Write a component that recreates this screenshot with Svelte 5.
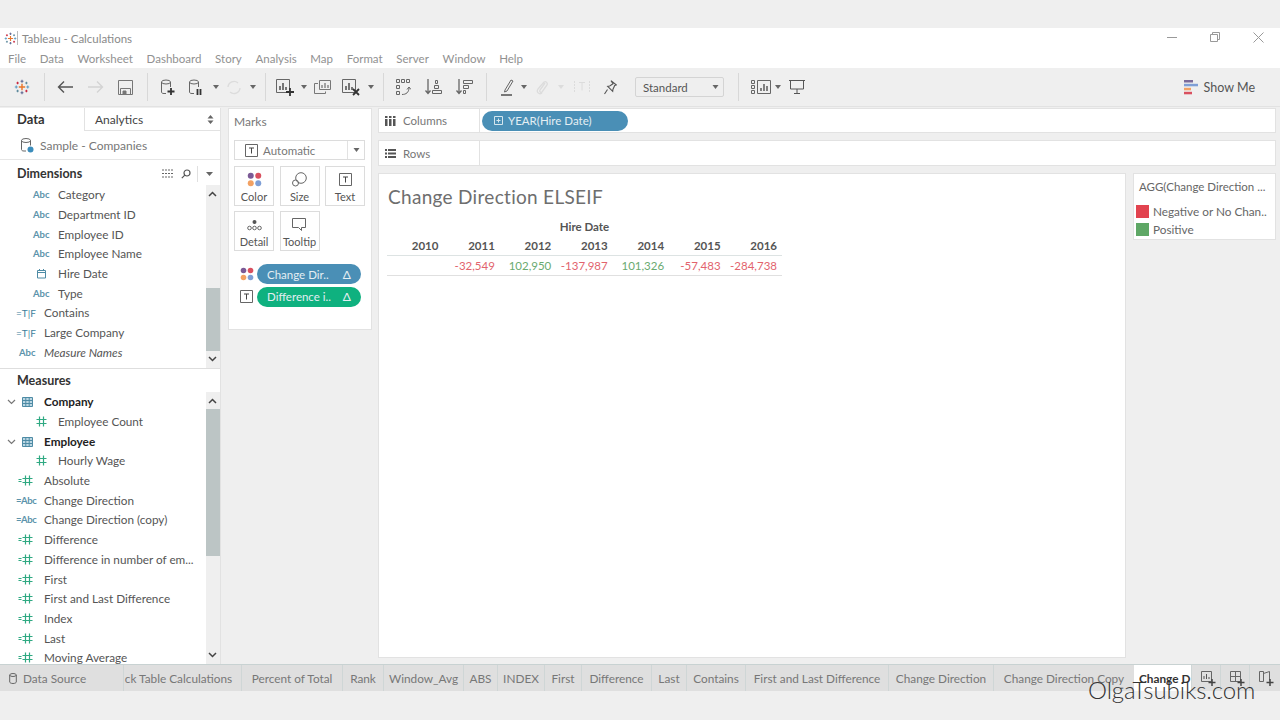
<script>
	const menus = ['File', 'Data', 'Worksheet', 'Dashboard', 'Story', 'Analysis', 'Map', 'Format', 'Server', 'Window', 'Help'];

	const dimensions = [
		{ name: 'Category', icon: 'abc', sub: true },
		{ name: 'Department ID', icon: 'abc', sub: true },
		{ name: 'Employee ID', icon: 'abc', sub: true },
		{ name: 'Employee Name', icon: 'abc', sub: true },
		{ name: 'Hire Date', icon: 'date', sub: true },
		{ name: 'Type', icon: 'abc', sub: true },
		{ name: 'Contains', icon: 'tf' },
		{ name: 'Large Company', icon: 'tf' },
		{ name: 'Measure Names', icon: 'abc', italic: true }
	];

	const measures = [
		{ name: 'Company', icon: 'table', bold: true },
		{ name: 'Employee Count', icon: 'hash', sub: true },
		{ name: 'Employee', icon: 'table', bold: true },
		{ name: 'Hourly Wage', icon: 'hash', sub: true },
		{ name: 'Absolute', icon: 'calc' },
		{ name: 'Change Direction', icon: 'calcabc' },
		{ name: 'Change Direction (copy)', icon: 'calcabc' },
		{ name: 'Difference', icon: 'calc' },
		{ name: 'Difference in number of em...', icon: 'calc' },
		{ name: 'First', icon: 'calc' },
		{ name: 'First and Last Difference', icon: 'calc' },
		{ name: 'Index', icon: 'calc' },
		{ name: 'Last', icon: 'calc' },
		{ name: 'Moving Average', icon: 'calc' }
	];

	const years = [2010, 2011, 2012, 2013, 2014, 2015, 2016];
	const values = [
		{ v: '', c: '' },
		{ v: '-32,549', c: 'neg' },
		{ v: '102,950', c: 'pos' },
		{ v: '-137,987', c: 'neg' },
		{ v: '101,326', c: 'pos' },
		{ v: '-57,483', c: 'neg' },
		{ v: '-284,738', c: 'neg' }
	];

	const tabs = [
		{ name: 'ck Table Calculations', w: 118, clip: true },
		{ name: 'Percent of Total', w: 101 },
		{ name: 'Rank', w: 41 },
		{ name: 'Window_Avg', w: 80 },
		{ name: 'ABS', w: 34 },
		{ name: 'INDEX', w: 47 },
		{ name: 'First', w: 37 },
		{ name: 'Difference', w: 70 },
		{ name: 'Last', w: 35 },
		{ name: 'Contains', w: 59 },
		{ name: 'First and Last Difference', w: 143 },
		{ name: 'Change Direction', w: 105 },
		{ name: 'Change Direction Copy', w: 141 }
	];
</script>

{#snippet logo(size)}
	<svg width={size} height={size} viewBox="0 0 20 20" fill="none" stroke-width="1.3">
		<path d="M10 6v8M6 10h8" stroke="#e8762b" stroke-width="1.8" />
		<path d="M10 1v3.600M8.200 2.800h3.600M10 15.400V19M8.200 17.200h3.600" stroke="#5b6591" />
		<path d="M2.800 8.200v3.600M1 10h3.600M17.200 8.200v3.600M15.400 10H19" stroke="#5b9bc4" />
		<path d="M4.500 3.500v3M3 5h3M15.500 13.500v3M14 15h3" stroke="#c72037" />
		<path d="M15.500 3.500v3M14 5h3M4.500 13.500v3M3 15h3" stroke="#59879b" />
	</svg>
{/snippet}

{#snippet fieldIcon(kind)}
	{#if kind === 'abc'}
		<span class="ico-abc">Abc</span>
	{:else if kind === 'tf'}
		<span class="ico-tf">=T|F</span>
	{:else if kind === 'calcabc'}
		<span class="ico-abc calcabc">=Abc</span>
	{:else if kind === 'date'}
		<svg class="ico-sub" width="11" height="11" viewBox="0 0 11 11" fill="none" stroke="#4e8ba5">
			<path d="M1.500 2.500h8v7.500h-8zM1.500 4.500h8M3.500 1v2M7.500 1v2" />
		</svg>
	{:else if kind === 'hash'}
		<svg class="ico-sub" width="11" height="11" viewBox="0 0 11 11" stroke="#2fa982" fill="none" stroke-width="1.200">
			<path d="M3.500 0.500v10M7.500 0.500v10M0.500 3.500h10M0.500 7.500h10" />
		</svg>
	{:else if kind === 'calc'}
		<svg class="ico-calc" width="15" height="11" viewBox="0 0 15 11" stroke="#2fa982" fill="none" stroke-width="1.200">
			<path d="M0.500 4.500h3M0.500 6.500h3M7.500 0.500v10M11.500 0.500v10M4.500 3.500h10M4.500 7.500h10" />
		</svg>
	{:else if kind === 'table'}
		<svg class="ico-table" width="11" height="11" viewBox="0 0 11 11" fill="#bcd7e3" stroke="#4e8ba5">
			<path d="M0.500 1.500h10v9h-10zM0.500 4.500h10M0.500 7.500h10M3.800 1.500v9M7.200 1.500v9" />
		</svg>
	{/if}
{/snippet}

{#snippet scrollbar(thumbTop, thumbHeight)}
	<div class="scroll">
		<svg class="arrow up" width="9" height="6" viewBox="0 0 9 6" fill="none" stroke="#444" stroke-width="1.500"><path d="M1 5l3.500-3.500L8 5" /></svg>
		<div class="thumb" style="top:{thumbTop}px;height:{thumbHeight}px"></div>
		<svg class="arrow down" width="9" height="6" viewBox="0 0 9 6" fill="none" stroke="#444" stroke-width="1.500"><path d="M1 1l3.500 3.500L8 1" /></svg>
	</div>
{/snippet}

{#snippet fieldRows(list)}
	{#each list as f}
		<div class="row" class:sub={f.sub} class:bold={f.bold} class:italic={f.italic}>
			{#if f.bold}
				<svg class="chev" width="9" height="6" viewBox="0 0 9 6" fill="none" stroke="#777" stroke-width="1.200"><path d="M1 1l3.500 3.500L8 1" /></svg>
			{/if}
			<span class="ico">{@render fieldIcon(f.icon)}</span>
			<span>{f.name}</span>
		</div>
	{/each}
{/snippet}

{#snippet caret(w = 6)}
	<svg class="caret" width={w} height="4" viewBox="0 0 6 4"><path d="M0 0h6L3 4z" fill="#666" /></svg>
{/snippet}

{#snippet tIcon()}
	<svg width="13" height="13" viewBox="0 0 13 13" fill="none" stroke="#666"><path d="M0.500 0.500h12v12h-12z" /><path d="M4 4h5M6.500 4v5.500" stroke="#444" /></svg>
{/snippet}

{#snippet dots(size)}
	<svg width={size} height={size} viewBox="0 0 16 16">
		<circle cx="4" cy="4" r="3.200" fill="#7b5a96" /><circle cx="12" cy="4" r="3.200" fill="#d9505f" />
		<circle cx="4" cy="12" r="3.200" fill="#f2a163" /><circle cx="12" cy="12" r="3.200" fill="#7f9fd6" />
	</svg>
{/snippet}

<div class="app">
	<div class="top-band"></div>

	<header class="titlebar">
		<span class="app-logo">{@render logo(13)}</span>
		<span class="title">Tableau - Calculations</span>
		<div class="winctl">
			<svg width="10" height="10" viewBox="0 0 10 10" stroke="#999" fill="none"><path d="M0 5.500h10" /></svg>
			<svg width="10" height="10" viewBox="0 0 10 10" stroke="#999" fill="none"><path d="M0.500 2.500h7v7h-7zM2.500 2.500v-2h7v7h-2" /></svg>
			<svg width="11" height="11" viewBox="0 0 11 11" stroke="#999" fill="none"><path d="M0.500 0.500l10 10M10.500 0.500l-10 10" /></svg>
		</div>
	</header>

	<nav class="menubar">
		{#each menus as m}<span>{m}</span>{/each}
	</nav>

	<div class="toolbar">
		<span class="tb w44">{@render logo(16)}</span>
		<i class="sep"></i>
		<span class="tb w30 ml5">
			<svg width="17" height="14" viewBox="0 0 17 14" fill="none" stroke="#555" stroke-width="1.400"><path d="M16 7H2M7 1.500L1.500 7 7 12.500" /></svg>
		</span>
		<span class="tb w30">
			<svg width="17" height="14" viewBox="0 0 17 14" fill="none" stroke="#d4d4d4" stroke-width="1.400"><path d="M1 7h14M10 1.500L15.500 7 10 12.500" /></svg>
		</span>
		<span class="tb w30">
			<svg width="15" height="15" viewBox="0 0 15 15" fill="none" stroke="#777"><path d="M0.500 0.500h14v14h-14zM2.500 8.500h10v6h-10z" /><path d="M5 11h3v3.500H5z" fill="#777" /></svg>
		</span>
		<i class="sep ml7"></i>
		<span class="tb w29 ml5">
			<svg width="16" height="17" viewBox="0 0 16 17" fill="none" stroke="#666"><ellipse cx="6" cy="3" rx="4.500" ry="2" /><path d="M1.500 3v10c0 1 1 1.500 2.500 1.500h2M10.500 3v5" /><path d="M11 9v7M7.500 12.500h7" stroke="#333" stroke-width="1.800" /></svg>
		</span>
		<span class="tb w27">
			<svg width="16" height="17" viewBox="0 0 16 17" fill="none" stroke="#666"><ellipse cx="6" cy="3" rx="4.500" ry="2" /><path d="M1.500 3v10c0 1 1 1.500 2.500 1.500h2M10.500 3v5" /><path d="M9.500 10v6M12.500 10v6" stroke="#333" stroke-width="1.800" /></svg>
		</span>
		<span class="tb w13">{@render caret()}</span>
		<span class="tb w24">
			<svg width="16" height="15" viewBox="0 0 16 15" fill="none" stroke="#dcdcdc" stroke-width="1.400"><path d="M2 7a6 6 0 0 1 10-4M14 8a6 6 0 0 1-10 4" /></svg>
		</span>
		<span class="tb w13">{@render caret()}</span>
		<i class="sep ml6"></i>
		<span class="tb w28 ml5">
			<svg width="19" height="17" viewBox="0 0 19 17" fill="none" stroke="#666"><path d="M0.500 0.500h13v13h-13z" /><path d="M4 11V7M7 11V4M10 11V8" stroke="#444" stroke-width="1.400" /><path d="M14 9v8M10 13h8" stroke="#333" stroke-width="1.800" /></svg>
		</span>
		<span class="tb w9">{@render caret()}</span>
		<span class="tb w29">
			<svg width="17" height="15" viewBox="0 0 17 15" fill="none" stroke="#777"><path d="M5.500 0.500h11v9h-11z" /><path d="M8 8V5M11 8V3M14 8V5" stroke="#555" /><path d="M4 3.500H0.500v10h11v-2" /></svg>
		</span>
		<span class="tb w28">
			<svg width="19" height="17" viewBox="0 0 19 17" fill="none" stroke="#666"><path d="M0.500 0.500h13v13h-13z" /><path d="M4 11V7M7 11V4M10 11V8" stroke="#444" stroke-width="1.400" /><path d="M11 10l6 6M17 10l-6 6" stroke="#333" stroke-width="1.800" /></svg>
		</span>
		<span class="tb w12">{@render caret()}</span>
		<i class="sep ml6"></i>
		<span class="tb w28 ml5">
			<svg width="15" height="17" viewBox="0 0 15 17" fill="none" stroke="#666"><path d="M0.500 0.500h3v3h-3zM5.500 0.500h3v3h-3zM10.500 0.500h3v3h-3zM0.500 6.500h3v3h-3zM0.500 12.500h3v3h-3zM6 15.500c4 0 7-2 7-7" /><path d="M11 10.500l2-2.500 2 2.500" /></svg>
		</span>
		<span class="tb w33">
			<svg width="17" height="16" viewBox="0 0 17 16" fill="none" stroke="#666"><path d="M3 0v14M0.500 11.500L3 14.500l2.500-3" stroke-width="1.300" /><path d="M10.500 1.500h2v3h-2zM9.500 6.500h4v3h-4zM7.500 11.500h9v3h-9z" /></svg>
		</span>
		<span class="tb w28">
			<svg width="17" height="16" viewBox="0 0 17 16" fill="none" stroke="#666"><path d="M3 0v14M0.500 11.500L3 14.500l2.500-3" stroke-width="1.300" /><path d="M7.500 1.500h9v3h-9zM7.500 6.500h5v3h-5zM7.500 11.500h2v3h-2z" /></svg>
		</span>
		<i class="sep ml8"></i>
		<span class="tb w28 ml6">
			<svg width="13" height="17" viewBox="0 0 13 17" fill="none" stroke="#666"><path d="M4 11l6-10 2 1-6 10-2.500 1z" /><path d="M0 16h11" stroke="#444" stroke-width="1.400" /></svg>
		</span>
		<span class="tb w6">{@render caret()}</span>
		<span class="tb w30">
			<svg width="12" height="15" viewBox="0 0 12 15" fill="none" stroke="#dcdcdc" stroke-width="1.300"><path d="M9 3L4 10c-1 2 1 3 2 2l5-7c1-2-1-4-3-3L2 9c-2 3 1 6 4 4" /></svg>
		</span>
		<span class="tb w8">
			<svg width="6" height="4" viewBox="0 0 6 4"><path d="M0 0h6L3 4z" fill="#dcdcdc" /></svg>
		</span>
		<span class="tb w34">
			<svg width="16" height="12" viewBox="0 0 16 12" fill="none" stroke="#dcdcdc" stroke-dasharray="2 1"><path d="M0.500 0v12M15.500 0v12" /><path d="M5 1.500h6M8 1.500v8" stroke-dasharray="none" /></svg>
		</span>
		<span class="tb w22">
			<svg width="13" height="15" viewBox="0 0 13 15" fill="none" stroke="#555" stroke-width="1.100"><path d="M7 0.700l5.300 4.200-1.600.600-1.800 4-.2 1.800-5-5 2-.3 3.300-2.200zM3.500 9.500L0.500 14" /></svg>
		</span>
		<div class="fit-select"><span>Standard</span>{@render caret(7)}</div>
		<i class="sep ml14"></i>
		<span class="tb w28 ml8">
			<svg width="20" height="14" viewBox="0 0 20 14" fill="none" stroke="#666"><path d="M0.500 0.500h3v3h-3zM0.500 5.500h3v3h-3zM0.500 10.500h3v3h-3zM6.500 0.500h13v13h-13z" /><path d="M10 11V8M13 11V4M16 11V6" stroke="#444" stroke-width="1.300" /></svg>
		</span>
		<span class="tb w6">{@render caret()}</span>
		<span class="tb w32">
			<svg width="16" height="14" viewBox="0 0 16 14" fill="none" stroke="#555"><path d="M0 0.500h16M1.500 0.500v8.500h13V0.500M8 9v4M5 13.500h6" /></svg>
		</span>
		<div class="showme">
			<svg width="14" height="15" viewBox="0 0 14 15">
				<path d="M0 0h9v2.500H0z" fill="#7b6a9a" /><path d="M0 3.800h14v2.500H0z" fill="#7f9fd6" />
				<path d="M0 7.800h7v2.500H0z" fill="#f2a163" /><path d="M0 11.800h8v2.500H0z" fill="#d9505f" />
			</svg>
			<span>Show Me</span>
		</div>
	</div>

	<main class="workspace">
		<aside class="data-pane">
			<div class="pane-tabs">
				<div class="tab-data">Data</div>
				<div class="tab-analytics">
					<span>Analytics</span>
					<svg width="7" height="9" viewBox="0 0 7 9" fill="#666"><path d="M3.500 0L6.500 3.500h-6zM3.500 9L0.500 5.500h6z" /></svg>
				</div>
			</div>
			<div class="source">
				<svg width="14" height="15" viewBox="0 0 14 15" fill="none" stroke="#666">
					<ellipse cx="6" cy="2.500" rx="4.500" ry="2" /><path d="M1.500 2.500v9c0 1 1 1.500 2.500 1.500h2M10.500 2.500v5" />
					<circle cx="10.500" cy="11.500" r="3" fill="#3c8dbc" stroke="none" />
				</svg>
				<span>Sample - Companies</span>
			</div>
			<div class="section-head">
				<strong>Dimensions</strong>
				<svg class="h1" width="12" height="9" viewBox="0 0 12 9" stroke="#666" fill="none" stroke-dasharray="2 1"><path d="M0 1h12M0 4.500h12M0 8h12" /></svg>
				<svg class="h2" width="10" height="10" viewBox="0 0 10 10" fill="none" stroke="#555" stroke-width="1.200"><circle cx="6" cy="4" r="3" /><path d="M3.800 6.200L0.800 9.200" /></svg>
				<i class="h-sep"></i>
				<svg class="h3" width="7" height="4" viewBox="0 0 7 4"><path d="M0 0h7L3.500 4z" fill="#666" /></svg>
			</div>
			<div class="field-list dims">
				<div class="rows">{@render fieldRows(dimensions)}</div>
				{@render scrollbar(103, 63)}
			</div>
			<div class="section-head measures-head"><strong>Measures</strong></div>
			<div class="field-list meas">
				<div class="rows">{@render fieldRows(measures)}</div>
				{@render scrollbar(17, 147)}
			</div>
		</aside>

		<section class="marks">
			<div class="marks-title">Marks</div>
			<div class="mark-type">
				<span class="mt-icon">{@render tIcon()}</span>
				<span class="mt-label">Automatic</span>
				<span class="mt-caret">{@render caret(7)}</span>
			</div>
			<div class="mark-grid">
				<div class="mark-btn">{@render dots(15)}<span>Color</span></div>
				<div class="mark-btn">
					<svg width="15" height="15" viewBox="0 0 15 15" fill="none" stroke="#666"><circle cx="9" cy="6" r="5.300" /><circle cx="3.500" cy="11" r="3" /></svg>
					<span>Size</span>
				</div>
				<div class="mark-btn">
					<span class="btn-ico">{@render tIcon()}</span>
					<span>Text</span>
				</div>
				<div class="mark-btn">
					<svg width="15" height="15" viewBox="0 0 15 15" fill="none" stroke="#666"><circle cx="7.500" cy="5" r="2" fill="#555" stroke="none" /><circle cx="2.500" cy="11" r="1.800" /><circle cx="7.500" cy="11" r="1.800" /><circle cx="12.500" cy="11" r="1.800" /></svg>
					<span>Detail</span>
				</div>
				<div class="mark-btn">
					<svg width="15" height="15" viewBox="0 0 15 15" fill="none" stroke="#666"><path d="M0.500 1.500h13v9h-4v3l-3-3h-6z" /></svg>
					<span>Tooltip</span>
				</div>
			</div>
			<div class="mark-pills">
				<div class="pill-row">
					<span class="pill-ico">{@render dots(14)}</span>
					<div class="pill blue"><span>Change Dir..</span><b>Δ</b></div>
				</div>
				<div class="pill-row">
					<span class="pill-ico">{@render tIcon()}</span>
					<div class="pill green"><span>Difference i..</span><b>Δ</b></div>
				</div>
			</div>
		</section>

		<div class="canvas">
			<div class="shelf columns-shelf">
				<div class="shelf-label">
					<svg width="11" height="10" viewBox="0 0 11 10" fill="#555"><path d="M0 0h2.500v2H0zM0 3h2.500v7H0zM4 0h2.500v2H4zM4 3h2.500v7H4zM8 0h2.500v2H8zM8 3h2.500v7H8z" /></svg>
					<span>Columns</span>
				</div>
				<div class="shelf-body">
					<div class="pill blue year">
						<svg width="9" height="9" viewBox="0 0 9 9" fill="none" stroke="#d5e6ee"><path d="M0.500 0.500h8v8h-8zM2.500 4.500h4M4.500 2.500v4" /></svg>
						<span>YEAR(Hire Date)</span>
					</div>
				</div>
			</div>
			<div class="shelf rows-shelf">
				<div class="shelf-label">
					<svg width="11" height="9" viewBox="0 0 11 9" fill="#555"><path d="M0 0h2v2H0zM3 0h8v2H3zM0 3.500h2v2H0zM3 3.500h8v2H3zM0 7h2v2H0zM3 7h8v2H3z" /></svg>
					<span>Rows</span>
				</div>
				<div class="shelf-body"></div>
			</div>
			<div class="lower">
				<div class="viz">
					<h1>Change Direction ELSEIF</h1>
					<div class="crosstab">
						<div class="axis-title">Hire Date</div>
						<div class="grid-row head">
							{#each years as y}<span>{y}</span>{/each}
						</div>
						<div class="grid-row body">
							{#each values as cell}<span class={cell.c}>{cell.v}</span>{/each}
						</div>
					</div>
				</div>
				<div class="legend">
					<div class="legend-title">AGG(Change Direction ...</div>
					<div class="legend-item"><i class="swatch red"></i><span>Negative or No Chan..</span></div>
					<div class="legend-item"><i class="swatch grn"></i><span>Positive</span></div>
				</div>
			</div>
		</div>
	</main>

	<footer class="tabbar">
		<div class="ds-tab">
			<svg width="8" height="11" viewBox="0 0 8 11" fill="none" stroke="#666"><ellipse cx="4" cy="2" rx="3.300" ry="1.500" /><path d="M0.700 2v7c0 .8 1.500 1.500 3.300 1.500S7.300 9.800 7.300 9V2" /></svg>
			<span>Data Source</span>
		</div>
		{#each tabs as t}
			<div class="sheet-tab" class:clip={t.clip} style="width:{t.w}px">{t.name}</div>
		{/each}
		<div class="sheet-tab active">Change D</div>
		<div class="new-tab">
			<svg width="15" height="15" viewBox="0 0 15 15" fill="none" stroke="#666"><path d="M0.500 0.500h10v10h-10z" /><path d="M3 8V5M5.500 8V3M8 8V6" stroke="#555" /><path d="M11 8v7M7.500 11.500h7" stroke="#444" stroke-width="1.500" /></svg>
		</div>
		<div class="new-tab">
			<svg width="15" height="15" viewBox="0 0 15 15" fill="none" stroke="#666"><path d="M0.500 0.500h10v10h-10zM0.500 5.500h10M5.500 0.500v10" /><path d="M11 8v7M7.500 11.500h7" stroke="#444" stroke-width="1.500" /></svg>
		</div>
		<div class="new-tab">
			<svg width="15" height="15" viewBox="0 0 15 15" fill="none" stroke="#666"><path d="M0.500 0.500h4v10h-4zM4.500 2.500l6-2v9" /><path d="M11 8v7M7.500 11.500h7" stroke="#444" stroke-width="1.500" /></svg>
		</div>
	</footer>

	<div class="watermark">OlgaTsubiks.com</div>
</div>

<style>
	:global(body) {
		margin: 0;
		background: #efefef;
		font-family: 'Lato', 'Open Sans', sans-serif;
		font-size: 12px;
		color: #555;
		overflow: hidden;
	}

	.app {
		position: relative;
		width: 1280px;
		height: 720px;
		overflow: hidden;
	}

	.top-band {
		height: 28px;
	}

	.titlebar {
		height: 20px;
		background: #fff;
		display: flex;
		align-items: center;
		padding-left: 3px;
		color: #8a8a8a;
		font-size: 11.5px;
	}

	.app-logo {
		width: 14px;
		height: 14px;
		border-right: 1px solid #bbb;
		display: flex;
		align-items: center;
		justify-content: center;
		margin-right: 4px;
	}

	.winctl {
		margin-left: auto;
		display: flex;
		gap: 33px;
		padding-right: 16px;
		align-items: center;
		margin-top: -2px;
	}

	.menubar {
		height: 20px;
		background: #fff;
		display: flex;
		gap: 13.7px;
		align-items: center;
		padding-left: 8px;
		font-size: 11.5px;
		color: #919191;
	}

	.toolbar {
		height: 39px;
		box-sizing: border-box;
		display: flex;
		align-items: center;
		border-bottom: 1px solid #e2e2e2;
	}

	.tb {
		display: flex;
		align-items: center;
		justify-content: center;
		flex: none;
	}

	.w6 { width: 6px; }
	.w8 { width: 8px; }
	.w9 { width: 9px; }
	.w12 { width: 12px; }
	.w13 { width: 13px; }
	.w22 { width: 22px; }
	.w24 { width: 24px; }
	.w27 { width: 27px; }
	.w28 { width: 28px; }
	.w29 { width: 29px; }
	.w30 { width: 30px; }
	.w32 { width: 32px; }
	.w33 { width: 33px; }
	.w34 { width: 34px; }
	.w44 { width: 44px; }

	.ml5 { margin-left: 5px; }
	.ml6 { margin-left: 6px; }
	.ml7 { margin-left: 7px; }
	.ml8 { margin-left: 8px; }
	.ml14 { margin-left: 14px; }

	.sep {
		width: 1px;
		height: 28px;
		background: #d8d8d8;
		flex: none;
	}

	.fit-select {
		width: 89px;
		height: 20px;
		box-sizing: border-box;
		border: 1px solid #d4d4d4;
		border-radius: 2px;
		display: flex;
		align-items: center;
		justify-content: space-between;
		padding: 0 4px 0 7px;
		margin-left: 14px;
		color: #555;
		font-size: 11.5px;
		flex: none;
	}

	.showme {
		margin-left: auto;
		margin-right: 25px;
		display: flex;
		align-items: center;
		gap: 6px;
		font-size: 12.5px;
		color: #555;
	}

	.workspace {
		height: 557px;
		display: flex;
		padding-top: 1px;
		box-sizing: border-box;
	}

	.data-pane {
		width: 221px;
		flex: none;
		background: #fff;
		border-right: 1px solid #e2e2e2;
		box-sizing: border-box;
		display: flex;
		flex-direction: column;
	}

	.pane-tabs {
		height: 23px;
		display: flex;
		align-items: stretch;
	}

	.tab-data {
		width: 84px;
		padding-left: 17px;
		box-sizing: border-box;
		font-weight: 700;
		font-size: 13px;
		color: #333;
		line-height: 22px;
	}

	.tab-analytics {
		flex: 1;
		border-left: 1px solid #e2e2e2;
		border-bottom: 1px solid #e2e2e2;
		display: flex;
		align-items: center;
		justify-content: space-between;
		padding: 1px 6px 0 10px;
		color: #444;
		background: #fff;
	}

	.source {
		height: 28px;
		display: flex;
		align-items: center;
		gap: 6px;
		padding-left: 20px;
		border-bottom: 1px solid #e6e6e6;
		color: #777;
	}

	.section-head {
		height: 25px;
		box-sizing: border-box;
		padding-top: 2px;
		display: flex;
		align-items: center;
		padding-left: 17px;
		font-size: 12.5px;
		color: #333;
		flex: none;
	}

	.section-head strong {
		font-weight: 700;
	}

	.h1 { margin-left: auto; }
	.h2 { margin-left: 7px; }
	.h-sep {
		width: 1px;
		height: 16px;
		background: #e0e0e0;
		margin-left: 6px;
	}
	.h3 { margin: 0 7px 0 8px; }

	.field-list {
		position: relative;
		overflow: hidden;
		flex: none;
	}

	.dims {
		height: 183px;
		border-bottom: 1px solid #dedede;
	}

	.section-head.measures-head {
		height: 23px;
		padding-top: 0;
		padding-bottom: 1px;
	}

	.meas {
		height: 272px;
	}

	.rows {
		width: 206px;
		font-size: 11.75px;
	}

	.row {
		height: 19.7px;
		display: flex;
		align-items: center;
		padding-left: 16px;
		white-space: nowrap;
		color: #555;
	}

	.row.sub {
		padding-left: 30px;
	}

	.row.bold {
		font-weight: 700;
		color: #222;
	}

	.row.italic {
		font-style: italic;
	}

	.chev {
		position: absolute;
		left: 7px;
		margin-top: 1px;
	}

	.ico {
		width: 28px;
		flex: none;
		display: flex;
		align-items: center;
	}

	.ico-abc {
		margin-left: 3px;
		font-size: 9.5px;
		font-weight: 700;
		font-style: normal;
		color: #5c93ab;
	}

	.ico-abc.calcabc {
		margin-left: 0;
		letter-spacing: -0.4px;
	}

	.ico-tf {
		font-size: 10px;
		font-weight: 400;
		font-style: normal;
		color: #3f7f9c;
	}

	.ico-sub {
		margin-left: 6px;
	}

	.ico-calc {
		margin-left: 2px;
	}

	.ico-table {
		margin-left: 6px;
	}

	.scroll {
		position: absolute;
		top: 0;
		bottom: 0;
		right: 0;
		width: 14px;
		background: #efefef;
	}

	.thumb {
		position: absolute;
		left: 0;
		right: 0;
		background: #bcc5c5;
	}

	.arrow {
		position: absolute;
		left: 2px;
	}

	.arrow.up { top: 6px; }
	.arrow.down { bottom: 6px; }

	.marks {
		width: 144px;
		height: 222px;
		flex: none;
		margin-left: 7px;
		background: #fff;
		border: 1px solid #e2e2e2;
		box-sizing: border-box;
		padding: 0 5px;
	}

	.marks-title {
		height: 31px;
		line-height: 25px;
		color: #777;
		font-size: 12px;
	}

	.mark-type {
		height: 20px;
		border: 1px solid #dcdcdc;
		display: flex;
		align-items: center;
		box-sizing: border-box;
		width: 131px;
		color: #777;
		font-size: 11.5px;
	}

	.mt-icon {
		display: flex;
		margin: 0 5px 0 10px;
	}

	.mt-caret {
		margin-left: auto;
		width: 16px;
		height: 100%;
		display: flex;
		align-items: center;
		justify-content: center;
		border-left: 1px solid #e2e2e2;
	}

	.mark-grid {
		display: grid;
		grid-template-columns: repeat(3, 40px);
		grid-auto-rows: 39.5px;
		column-gap: 5.5px;
		row-gap: 5.5px;
		margin-top: 6px;
	}

	.mark-btn {
		border: 1px solid #dcdcdc;
		box-sizing: border-box;
		display: flex;
		flex-direction: column;
		align-items: center;
		padding-top: 5px;
		gap: 3px;
		font-size: 11px;
		line-height: 14px;
		color: #555;
	}

	.btn-ico {
		display: flex;
		height: 15px;
		align-items: center;
	}

	.mark-pills {
		margin-top: 13.5px;
		display: flex;
		flex-direction: column;
		gap: 2.5px;
	}

	.pill-row {
		display: flex;
		align-items: center;
		height: 20px;
	}

	.pill-ico {
		width: 23px;
		padding-left: 6px;
		box-sizing: border-box;
		display: flex;
		flex: none;
	}

	.pill {
		height: 20px;
		border-radius: 10px;
		color: #e4eef3;
		display: flex;
		align-items: center;
		font-size: 11.5px;
		box-sizing: border-box;
		white-space: nowrap;
	}

	.pill-row .pill {
		width: 104px;
		padding: 0 10px;
		justify-content: space-between;
	}

	.pill b {
		font-weight: 400;
		font-size: 12px;
	}

	.blue { background: #4a8fb6; }
	.green { background: #0fb17f; }

	.canvas {
		width: 898px;
		margin-left: 6px;
		flex: none;
		display: flex;
		flex-direction: column;
	}

	.shelf {
		display: flex;
		background: #fff;
		border: 1px solid #e2e2e2;
		box-sizing: border-box;
		flex: none;
	}

	.columns-shelf {
		height: 25px;
	}

	.rows-shelf {
		height: 26px;
		margin-top: 7px;
	}

	.shelf-label {
		width: 101px;
		flex: none;
		box-sizing: border-box;
		display: flex;
		align-items: center;
		gap: 7px;
		padding-left: 6px;
		border-right: 1px solid #e2e2e2;
		color: #777;
		font-size: 11.5px;
	}

	.shelf-body {
		flex: 1;
		display: flex;
		align-items: center;
		padding-left: 2px;
	}

	.pill.year {
		width: 146px;
		padding-left: 12px;
		gap: 5px;
	}

	.lower {
		flex: 1;
		display: flex;
		gap: 7px;
		margin-top: 7px;
		margin-bottom: 6px;
		min-height: 0;
	}

	.viz {
		flex: 1;
		background: #fff;
		border: 1px solid #e2e2e2;
		box-sizing: border-box;
		padding: 11px 9px;
	}

	.viz h1 {
		margin: 0;
		font-size: 19px;
		font-weight: 400;
		letter-spacing: 0.3px;
		color: #6e6e6e;
		line-height: 24px;
	}

	.crosstab {
		width: 395px;
		margin-top: 10px;
		margin-left: -1px;
	}

	.axis-title {
		text-align: center;
		font-size: 11.5px;
		font-weight: 700;
		color: #555;
		line-height: 16px;
		height: 16px;
	}

	.grid-row {
		display: grid;
		grid-template-columns: repeat(7, 1fr);
		height: 19px;
		align-items: center;
		font-size: 11.5px;
	}

	.grid-row span {
		text-align: right;
		padding-right: 5px;
	}

	.grid-row.head {
		font-weight: 700;
		color: #555;
		height: 21px;
		border-bottom: 1px solid #dde3e3;
		box-sizing: border-box;
	}

	.grid-row.body {
		border-bottom: 1px solid #e0e0e0;
	}

	.neg { color: #e2636d; }
	.pos { color: #6aaa70; }

	.legend {
		width: 143px;
		height: 67px;
		flex: none;
		background: #fff;
		border: 1px solid #e2e2e2;
		box-sizing: border-box;
		padding: 0 2px;
	}

	.legend-title {
		height: 28px;
		line-height: 26px;
		padding-left: 3px;
		color: #666;
		font-size: 11.5px;
		white-space: nowrap;
		overflow: hidden;
	}

	.legend-item {
		display: flex;
		align-items: center;
		gap: 4px;
		height: 18.5px;
		color: #666;
		font-size: 11.75px;
		white-space: nowrap;
	}

	.swatch {
		width: 13px;
		height: 13px;
		flex: none;
	}

	.red { background: #e2434f; }
	.grn { background: #5ea765; }

	.tabbar {
		height: 27px;
		display: flex;
		background: #dfdfdf;
		border-top: 1px solid #c8d2d2;
		box-sizing: border-box;
		color: #777;
		font-size: 11.8px;
	}

	.ds-tab {
		width: 123px;
		flex: none;
		display: flex;
		align-items: center;
		gap: 6px;
		padding-left: 9px;
		box-sizing: border-box;
	}

	.sheet-tab {
		flex: none;
		box-sizing: border-box;
		display: flex;
		align-items: center;
		justify-content: center;
		border-left: 1px solid #cfd6d6;
		white-space: nowrap;
		overflow: hidden;
	}

	.sheet-tab.clip {
		padding-right: 8px;
	}

	.sheet-tab.active {
		width: 57px;
		background: #fff;
		border-left: 0;
		color: #333;
		font-weight: 700;
		justify-content: flex-start;
		padding-left: 5px;
	}

	.new-tab {
		width: 29px;
		flex: none;
		display: flex;
		align-items: center;
		justify-content: center;
		padding-left: 4px;
		border-left: 1px solid #cfd6d6;
		box-sizing: border-box;
	}

	.watermark {
		position: absolute;
		left: 1088px;
		top: 675px;
		font-size: 24px;
		font-weight: 300;
		letter-spacing: -0.1px;
		color: #333;
		line-height: 30px;
		white-space: nowrap;
	}
</style>
